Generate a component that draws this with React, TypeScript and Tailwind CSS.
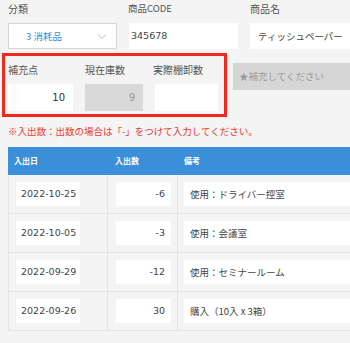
import React from "react";

const jp = { fontFamily: '"Noto Sans CJK JP", "DejaVu Sans", sans-serif' };
const num = { fontFamily: '"DejaVu Sans", "Noto Sans CJK JP", sans-serif' };

const rows = [
  { date: "2022-10-25", qty: "-6", memo: "使用：ドライバー控室" },
  { date: "2022-10-05", qty: "-3", memo: "使用：会議室" },
  { date: "2022-09-29", qty: "-12", memo: "使用：セミナールーム" },
  { date: "2022-09-26", qty: "30", memo: "購入（10入 x 3箱）" },
];

export default function App() {
  return (
    <div className="w-[350px] h-[343px] overflow-hidden bg-[#f4f4f4] text-[#444]" style={jp}>
      {/* top row */}
      <div className="flex pt-[2px] pl-[8px] w-[420px]">
        <div className="w-[109px] shrink-0">
          <div className="text-[10px] leading-[13px] h-[13px] text-[#555]">分類</div>
          <div className="mt-[8px] h-[26px] bg-white border border-[#d6d6d6] flex items-center relative">
            <span className="pl-[17px] text-[9.5px] text-[#3a8ad2]" style={jp}>3 消耗品</span>
            <svg className="absolute right-[9px] top-[9px]" width="10" height="7" viewBox="0 0 10 7">
              <path d="M1 1.5 L5 5.5 L9 1.5" fill="none" stroke="#b8b8b8" strokeWidth="1" />
            </svg>
          </div>
        </div>
        <div className="w-[110px] shrink-0 ml-[11px]">
          <div className="text-[9.5px] leading-[13px] h-[13px] text-[#555]">商品CODE</div>
          <div className="mt-[8px] h-[26px] bg-white flex items-center pl-[2px] ml-[1px] text-[9.5px] text-[#444]" style={num}>345678</div>
        </div>
        <div className="w-[150px] shrink-0 ml-[12px]">
          <div className="text-[10px] leading-[13px] h-[13px] text-[#555]">商品名</div>
          <div className="mt-[8px] h-[26px] bg-white flex items-center pl-[8px] text-[9.5px] text-[#444]">ティッシュペーパー</div>
        </div>
      </div>

      {/* red box row */}
      <div className="flex mt-[4px] pl-[2px]">
        <div className="w-[225px] h-[64px] border-[3px] border-[#f0281e] shrink-0 pl-[3px] pt-[7px]">
          <div className="flex">
            <div className="w-[65px]">
              <div className="text-[10px] leading-[13px] text-[#555]">補充点</div>
              <div className="mt-[8px] h-[27px] bg-white flex items-center justify-end pr-[8px] text-[10px] text-[#333]" style={num}>10</div>
            </div>
            <div className="w-[58px] ml-[12px]">
              <div className="text-[10px] leading-[13px] text-[#555]">現在庫数</div>
              <div className="mt-[8px] h-[27px] bg-[#d9d9d9] flex items-center justify-end pr-[8px] text-[10px] text-[#999]" style={num}>9</div>
            </div>
            <div className="w-[65px] ml-[10px]">
              <div className="text-[10px] leading-[13px] text-[#555]">実際棚卸数</div>
              <div className="mt-[8px] ml-[2px] h-[27px] bg-white" />
            </div>
          </div>
        </div>
        <div className="ml-[6px] mt-[10px] h-[27px] w-[130px] shrink-0 bg-[#d6d6d6] flex items-center pl-[6px] text-[9.5px] text-[#9a9a9a]">
          ★補充してください
        </div>
      </div>

      <div className="pl-[8px] mt-[7px] text-[9.5px] leading-[14px] text-[#ea3a2e]">
        ※入出数：出数の場合は「-」をつけて入力してください。
      </div>

      {/* table */}
      <div className="ml-[8px] mt-[9px] w-[360px]">
        <div className="h-[28px] bg-[#3b8fd8] flex items-center text-white text-[8px] font-bold">
          <div className="w-[100px] pl-[6px]">入出日</div>
          <div className="w-[70px] pl-[7px]">入出数</div>
          <div className="flex-1 pl-[6px]">備考</div>
        </div>
        <div className="border-l border-[#e4e4e4]">
          {rows.map((r, i) => (
            <div key={i} className="flex border-b border-[#e4e4e4]">
              <div className="w-[99px] py-[7px] pl-[7px] border-r border-[#e4e4e4]">
                <div className="w-[64px] h-[24px] bg-white flex items-center pl-[5px] text-[9.5px] text-[#444]" style={num}>{r.date}</div>
              </div>
              <div className="w-[70px] py-[7px] pl-[8px] border-r border-[#e4e4e4]">
                <div className="w-[55px] h-[24px] bg-white flex items-center justify-end pr-[6px] text-[9.5px] text-[#444]" style={num}>{r.qty}</div>
              </div>
              <div className="flex-1 py-[7px] pl-[6px]">
                <div className="h-[24px] bg-white flex items-center pl-[6px] text-[9.5px] text-[#444]">{r.memo}</div>
              </div>
            </div>
          ))}
        </div>
      </div>
    </div>
  );
}
